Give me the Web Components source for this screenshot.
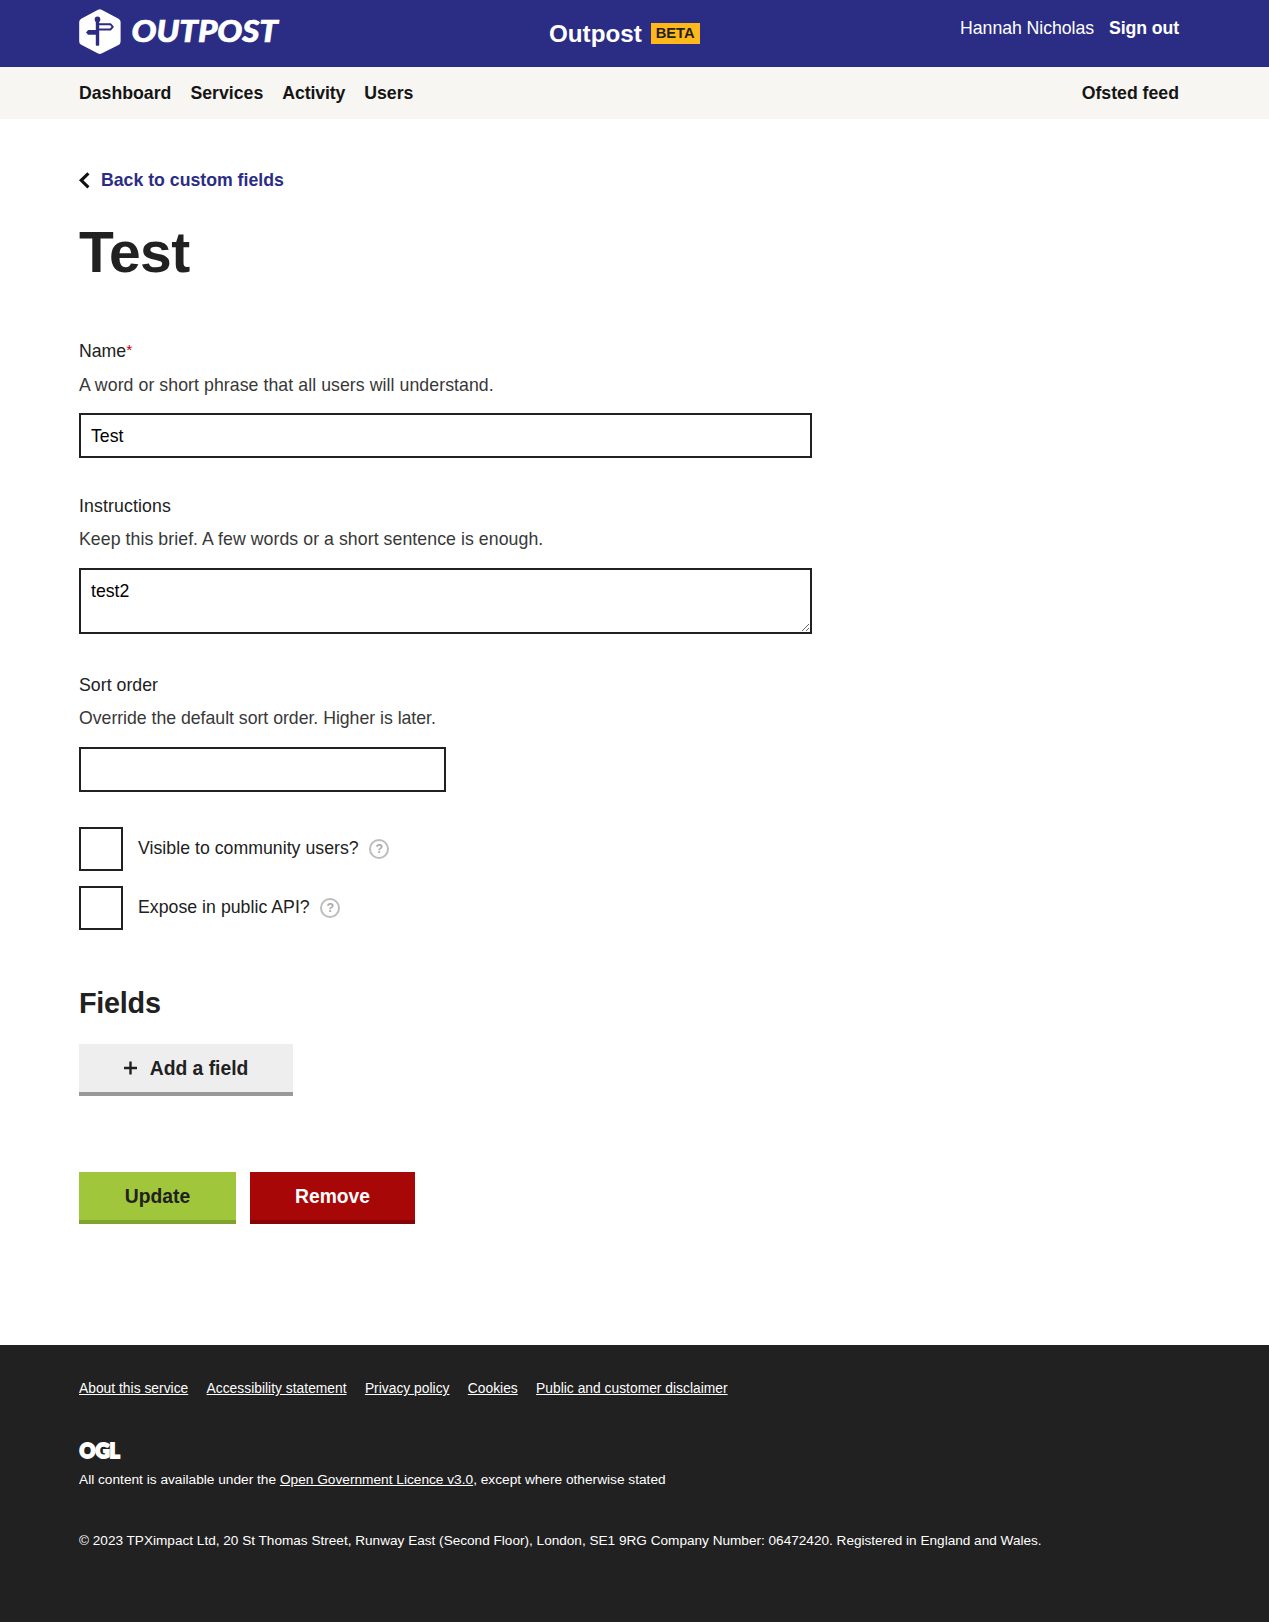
<!DOCTYPE html>
<html lang="en">
<head>
<meta charset="utf-8">
<title>Test | Outpost</title>
<style>
  body { margin: 0; background: #fff; color: #212121; font: 17.7px/26px "Liberation Sans", sans-serif; }
</style>
</head>
<body>
<outpost-page></outpost-page>
<script>
const define = (name, html) => {
  const tpl = document.createElement('template');
  tpl.innerHTML = html;
  customElements.define(name, class extends HTMLElement {
    constructor() {
      super();
      this.attachShadow({ mode: 'open' }).append(tpl.content.cloneNode(true));
    }
  });
};

define('outpost-logo', `
<style>:host{display:block;width:202px;height:46px}svg{display:block}</style>
<svg width="202" height="46" viewBox="0 0 202 46" role="img" aria-label="Outpost">
  <path d="M20.8 4 37.8 13V32.5L20.8 41.2 4 32.5V13Z" fill="#fff" stroke="#fff" stroke-width="7.6" stroke-linejoin="round"/>
  <g fill="#2b2d84">
    <circle cx="18.5" cy="10.4" r="2.8"/>
    <rect x="16.8" y="10" width="3.4" height="26.8" rx=".8"/>
    <path d="M17 21H9.2L7 23.4 9.2 25.8H17Z"/>
  </g>
  <path d="M20 15.2H31.4L33.8 17.9 31.4 20.5H20" fill="none" stroke="#2b2d84" stroke-width="1.9" stroke-linejoin="round"/>
  <text x="52.4" y="33.2" font-family="Lato, sans-serif" font-style="italic" font-weight="900" font-size="31" fill="#fff" stroke="#fff" stroke-width=".7" textLength="146.5" lengthAdjust="spacingAndGlyphs">OUTPOST</text>
</svg>`);

define('site-header', `
<style>
  :host{display:block;background:#2b2d84;color:#fff}
  .in{box-sizing:border-box;width:1100px;height:67px;margin-left:79px;display:grid;grid-template-columns:470px 1fr auto;align-items:start}
  outpost-logo{margin-top:9px}
  .t{display:flex;align-items:flex-start;gap:9px;font:bold 24.2px/30px "Liberation Sans",sans-serif;padding-top:19px}
  .b{background:#ffb81c;color:#212121;font-size:14.7px;line-height:21px;padding:0 5px;height:21px;margin-top:4px}
  .u{display:flex;gap:15px;padding-top:15px}
  .u span{letter-spacing:-.05px}
  .u b{letter-spacing:-.1px}
</style>
<div class="in"><outpost-logo></outpost-logo>
<div class="t"><span>Outpost</span><span class="b">BETA</span></div>
<div class="u"><span>Hannah Nicholas</span><b>Sign out</b></div></div>`);

define('site-nav', `
<style>
  :host{display:block;background:#f7f6f2;color:#151515;font-weight:bold}
  .in{width:1100px;height:52px;margin-left:79px;display:flex;align-items:center;gap:19.1px}
  .r{margin-left:auto}
  .a{letter-spacing:-.14px}
</style>
<div class="in"><span>Dashboard</span><span>Services</span><span class="a">Activity</span><span>Users</span><span class="r">Ofsted feed</span></div>`);

define('back-link', `
<style>
  :host{display:flex;align-items:center;gap:10px;color:#2b2d84;font-weight:bold}
  svg{display:block;margin-top:1px}
</style>
<svg width="12" height="17" viewBox="0 0 12 17"><path d="M9.4 1.3 2.2 8.3 9.4 15.3" fill="none" stroke="#111" stroke-width="3.1"/></svg><span><slot></slot></span>`);

define('form-field', `
<style>
  :host{display:block}
  .l{display:block}
  .h{display:block;color:#383838;margin:7px 0 16px;letter-spacing:var(--hint-spacing,.07px)}
  :host([required]) .h{margin:8px 0 15px}
  ::slotted(input),::slotted(textarea){display:block;box-sizing:border-box;width:100%;height:45px;margin:0;border:2px solid #212121;border-radius:0;padding:1px 10px 0;background:#fff;color:#000;font:17.7px/26px "Liberation Sans",sans-serif;outline:0}
  ::slotted(textarea){height:66px;padding:8px 10px}
</style>
<label class="l"><slot name="label"></slot></label><span class="h"><slot name="hint"></slot></span><slot></slot>`);

define('check-field', `
<style>
  :host{display:flex;align-items:center;height:44px}
  .c{box-sizing:border-box;width:44px;height:44px;border:2px solid #212121;background:#fff;margin-right:15px}
  .l{margin-top:-2px;letter-spacing:.03px}
  .q{box-sizing:border-box;width:20px;height:20px;border:2px solid #bdbdbd;border-radius:50%;margin-left:10.6px;color:#a8a8a8;font:bold 12.5px/16px "Liberation Sans",sans-serif;text-align:center}
</style>
<span class="c"></span><span class="l"><slot></slot></span><span class="q">?</span>`);

define('ui-button', `
<style>
  :host{box-sizing:border-box;display:flex;align-items:center;justify-content:center;gap:12px;height:52px;width:214px;border-bottom:4px solid #999;background:#eee;color:#212121;font:bold 19.3px/26px "Liberation Sans",sans-serif}
  :host([kind=primary]){width:157px;background:#a0c63b;border-color:#80a32d}
  :host([kind=danger]){width:165px;background:#a70707;border-color:#850505;color:#fff}
  .l{padding-top:2px}
</style>
<slot name="icon"></slot><span class="l"><slot></slot></span>`);

define('plus-icon', `
<style>:host{display:block}svg{display:block}</style>
<svg width="14" height="14"><path d="M6.5 .5V13.5M0 7H13" stroke="#212121" stroke-width="2.4"/></svg>`);

define('custom-field-form', `
<style>
  :host{display:block;width:1100px;height:1226px;box-sizing:border-box;margin-left:79px;padding-top:48px}
  h1{font-size:57px;line-height:64px;letter-spacing:-.6px;margin:27px 0 54px}
  h2{font-size:28.8px;line-height:36px;letter-spacing:-.25px;margin:55px 0 23px}
  form-field{width:733px}
  .i{margin-top:35px}
  .i [slot=label],.s [slot=label]{letter-spacing:.13px}
  .s{margin-top:38px;margin-bottom:35px;width:367px;--hint-spacing:-.02px}
  .s [slot=label]{letter-spacing:.04px}
  check-field+check-field{margin-top:15px}
  i{color:#b00;font-style:normal;font-size:15.5px;line-height:1;vertical-align:2px}
  .act{display:flex;gap:14px;margin-top:76px}
</style>
<back-link>Back to custom fields</back-link>
<h1>Test</h1>
<form-field required><span slot="label">Name<i>*</i></span><span slot="hint">A word or short phrase that all users will understand.</span><input value="Test"></form-field>
<form-field class="i"><span slot="label">Instructions</span><span slot="hint">Keep this brief. A few words or a short sentence is enough.</span><textarea>test2</textarea></form-field>
<form-field class="s"><span slot="label">Sort order</span><span slot="hint">Override the default sort order. Higher is later.</span><input></form-field>
<check-field>Visible to community users?</check-field>
<check-field>Expose in public API?</check-field>
<h2>Fields</h2>
<ui-button><plus-icon slot="icon"></plus-icon>Add a field</ui-button>
<div class="act"><ui-button kind="primary">Update</ui-button><ui-button kind="danger">Remove</ui-button></div>`);

define('site-footer', `
<style>
  :host{display:block;background:#212121;color:#fff;height:277px;font-size:13.8px;line-height:20px}
  .in{width:1100px;margin-left:79px;padding-top:34px}
  .ln{display:flex;gap:18.3px;letter-spacing:.02px}
  a{text-decoration:underline}
  svg{display:block;margin:36px 0 5px;overflow:visible}
  p{margin:0}
  .l{font-size:13.7px}
  .c{font-size:13.6px;margin-top:41px}
</style>
<div class="in">
<div class="ln"><a>About this service</a><a>Accessibility statement</a><a>Privacy policy</a><a>Cookies</a><a>Public and customer disclaimer</a></div>
<svg width="44" height="30" viewBox="0 0 44 30"><text x="0.6" y="23" font-family="Lato, sans-serif" font-weight="900" font-size="21.5" fill="#fff" stroke="#fff" stroke-width="2" textLength="40.2" lengthAdjust="spacingAndGlyphs">OGL</text></svg>
<p class="l">All content is available under the <a>Open Government Licence v3.0</a>, except where otherwise stated</p>
<p class="c">© 2023 TPXimpact Ltd, 20 St Thomas Street, Runway East (Second Floor), London, SE1 9RG Company Number: 06472420. Registered in England and Wales.</p>
</div>`);

define('outpost-page', `
<style>:host{display:block}</style>
<site-header></site-header><site-nav></site-nav><custom-field-form></custom-field-form><site-footer></site-footer>`);
</script>
</body>
</html>
